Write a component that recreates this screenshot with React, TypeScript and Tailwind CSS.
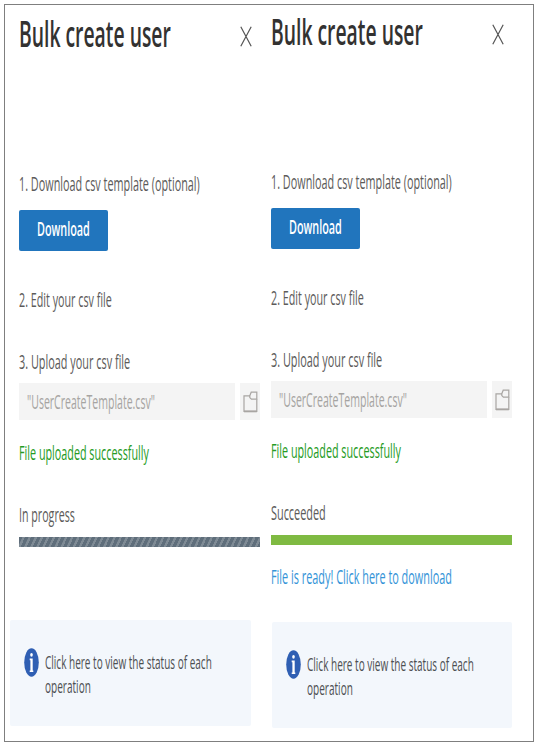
import { useLayoutEffect, useRef, useState } from 'react'
import clsx from 'clsx'

type FitTextProps = {
  text: string
  width: number
  className?: string
}

// Condenses a single line of text so that it fills the given width
function FitText({ text, width, className }: FitTextProps) {
  const ref = useRef<HTMLSpanElement>(null)
  const [scale, setScale] = useState(0.6)

  useLayoutEffect(() => {
    if (ref.current) setScale(width / ref.current.offsetWidth)
  }, [text, width])

  return (
    <div className={clsx('h-7 leading-7 whitespace-nowrap', className)} style={{ width }}>
      <span ref={ref} className="inline-block origin-left" style={{ transform: `scaleX(${scale})` }}>
        {text}
      </span>
    </div>
  )
}

function CloseIcon() {
  return (
    <svg width="12" height="21" viewBox="0 0 12 21" fill="none" stroke="#555" strokeWidth="1.2">
      <path d="M0.8 0.8 11.2 20.2M11.2 0.8 0.8 20.2" />
    </svg>
  )
}

function FolderIcon() {
  return (
    <svg width="15" height="22" viewBox="0 0 15 22" fill="none" stroke="#a8a5a2" strokeWidth="1.2">
      <path d="M7 4.8H1V20.4H13.8V8.2" />
      <path d="M1 20.4H13.8" strokeWidth="1.8" />
      <path d="M6.8 4.8 8.2 1.2H13.8V8.2H8.4L6.8 6.6Z" />
    </svg>
  )
}

function InfoIcon() {
  return (
    <svg width="15" height="29" viewBox="0 0 15 29">
      <ellipse cx="7.5" cy="14.5" rx="7.3" ry="14.2" fill="#2f5fb3" />
      <ellipse cx="7.5" cy="6.8" rx="1.3" ry="1.9" fill="#fff" />
      <path d="M5.7 10.6H8.7V22.4H9.3V24H5.7V22.4H6.4V12.2H5.7Z" fill="#fff" />
    </svg>
  )
}

type BulkPanelProps = {
  status: 'progress' | 'done'
}

function BulkPanel({ status }: BulkPanelProps) {
  const done = status === 'done'

  return (
    <section className={clsx('w-[241px] shrink-0', done ? 'pt-[3px]' : 'pt-[5px]')}>
      <header className="flex h-[45px] items-start justify-between pr-[8px]">
        <FitText text="Bulk create user" width={152} className="h-12! leading-12! text-[36px] font-semibold text-[#333231]" />
        <div className="pt-[16px]">
          <CloseIcon />
        </div>
      </header>

      <FitText text="1. Download csv template (optional)" width={181} className="mt-[115px]" />
      <button className="mt-[12px] flex h-[41px] w-[89px] justify-center rounded-[2px] bg-[#2175bd] pt-[5px] text-white">
        <FitText text="Download" width={53} className="font-semibold" />
      </button>

      <FitText text="2. Edit your csv file" width={93} className="mt-[35px]" />

      <FitText text="3. Upload your csv file" width={111} className="mt-[34px]" />
      <div className="mt-[7px] flex h-[37px] justify-between">
        <div className="w-[216px] bg-[#f4f4f4] pt-[5px] pl-[8px] text-[#a6a4a2]">
          <FitText text={'"UserCreateTemplate.csv"'} width={128} />
        </div>
        <button className="flex w-5 justify-center bg-[#f4f4f4] pt-[8px]">
          <FolderIcon />
        </button>
      </div>
      <FitText text="File uploaded successfully" width={130} className="mt-[19px] text-[#259b24]" />

      <FitText text={done ? 'Succeeded' : 'In progress'} width={done ? 55 : 56} className="mt-[34px]" />
      {done ? (
        <div className="mt-[8px] h-[10px] bg-[#7fba42]" />
      ) : (
        <div className="mt-[8px] h-[10px] bg-[repeating-linear-gradient(115deg,#5f6e7b_0px,#5f6e7b_3px,#7f8b95_3.5px,#7f8b95_5.5px)]" />
      )}

      <div className="mt-[18px] h-7">
        {done && <FitText text="File is ready! Click here to download" width={181} className="text-[#3494d8]" />}
      </div>

      <div
        className={clsx(
          'flex h-[106px] gap-[6px] rounded-[2px] bg-[#f3f7fc] pt-[28px] pl-[14px]',
          done ? 'mt-[31px] ml-px w-[240px]' : 'mt-[27px] -ml-[9px] w-[241px]',
        )}
      >
        <InfoIcon />
        <div className="pt-[2px] text-[19px] text-[#4d4f52]">
          <FitText text="Click here to view the status of each" width={167} className="h-6! leading-6!" />
          <FitText text="operation" width={46} className="h-6! leading-6!" />
        </div>
      </div>
    </section>
  )
}

export default function App() {
  return (
    <div className="h-[743px] w-[542px] overflow-hidden bg-white pt-[4px] pl-[4px] font-['Open_Sans','Noto_Sans',sans-serif] text-[20px] font-medium text-[#5c5b5a]">
      <main className="flex h-[738px] w-[530px] gap-[11px] border border-[#7f7f7f] pl-[14px]">
        <BulkPanel status="progress" />
        <BulkPanel status="done" />
      </main>
    </div>
  )
}
